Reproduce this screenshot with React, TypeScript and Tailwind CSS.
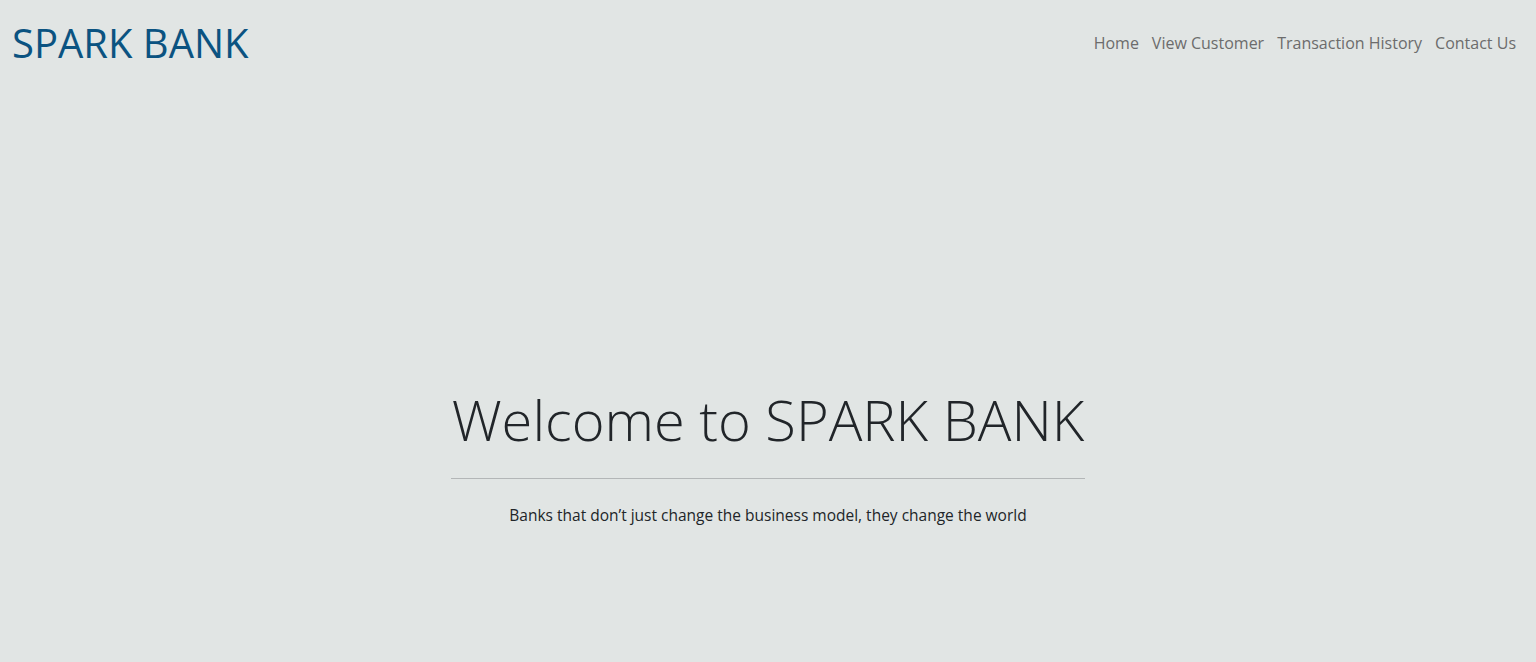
export default function App() {
  const font = { fontFamily: '"Open Sans", "Noto Sans", sans-serif' };
  return (
    <div className="min-h-[662px] w-full bg-[#e1e5e4]" style={font}>
      <header className="flex h-[86px] items-center justify-between pl-3 pr-5">
        <a className="text-[40px] leading-none text-[#0b5381]">SPARK BANK</a>
        <nav className="flex items-center gap-[13px] text-[16px] text-[#6c6c6c]">
          <a>Home</a>
          <a>View Customer</a>
          <a>Transaction History</a>
          <a>Contact Us</a>
        </nav>
      </header>
      <main className="mx-auto w-[634px] pt-[297px] text-center">
        <h1 className="whitespace-nowrap text-[56px] font-light leading-[72px] text-[#212529]">Welcome to SPARK BANK</h1>
        <hr className="mt-[23px] border-0 border-t border-[#b3b6b7]" />
        <p className="mt-[25px] whitespace-nowrap text-[15.5px] text-[#212529]">Banks that don’t just change the business model, they change the world</p>
      </main>
    </div>
  );
}
